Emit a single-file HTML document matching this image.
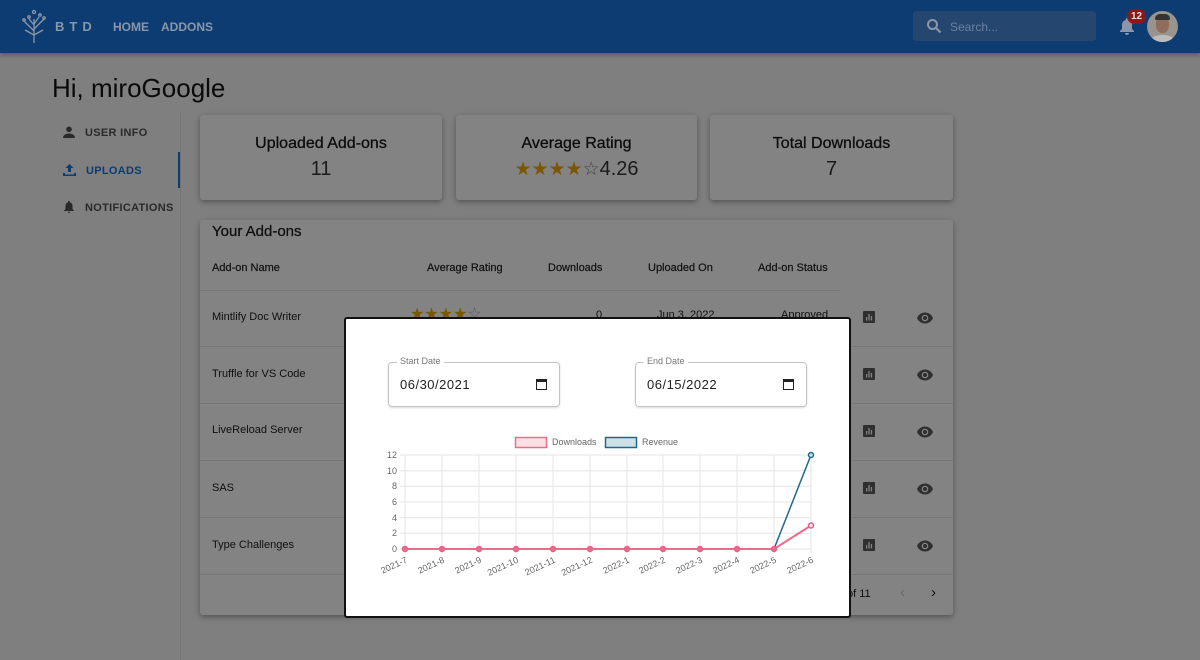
<!DOCTYPE html>
<html><head><meta charset="utf-8"><style>
*{box-sizing:border-box;margin:0;padding:0}
body{width:1200px;height:660px;overflow:hidden;background:#7f7f7f;font-family:"Liberation Sans",sans-serif;position:relative;color:#0f0f0f}
.nav{position:absolute;left:0;top:0;width:1200px;height:53px;background:#0c3c72;box-shadow:0 2px 4px rgba(0,0,0,.3)}
.nav .t{position:absolute;color:#8a97a8;font-weight:bold;font-size:12px}
.card{position:absolute;background:#838383;border-radius:3px;box-shadow:0 2px 6px rgba(0,0,0,.35)}
.stat{text-align:center}
.stat .h{font-size:16px;margin-top:20px;color:#0d0d0d;-webkit-text-stroke:.3px #0d0d0d}
.stat .v{font-size:20px;margin-top:5px;color:#1a1a1a}
.side{position:absolute;font-size:11px;font-weight:bold;color:#2a2a2a;letter-spacing:.3px}
.row{position:absolute;left:0;width:753px;border-top:1px solid #777;font-size:11px}
.th{position:absolute;top:262px;font-size:11px;color:#111;-webkit-text-stroke:.2px #111}
.modal{position:absolute;left:344px;top:317px;width:507px;height:301px;background:#fff;border:2px solid #111;border-radius:3px}
.inp{position:absolute;width:172px;height:45px;border:1px solid #c4c4c4;border-radius:4px;font-size:13px;color:#222;box-shadow:0 1px 2px rgba(0,0,0,.15)}
.inp .lab{position:absolute;top:-7px;left:8px;background:#fff;padding:0 3px;font-size:9px;color:#777}
.inp .val{position:absolute;left:11px;top:14px;letter-spacing:.5px}
.inp .cal{position:absolute;right:12px;top:16px;width:11px;height:11px;border:1.5px solid #222;border-top-width:3px}
</style></head><body>
<div class="nav">
<svg style="position:absolute;left:21px;top:9px" width="26" height="34" viewBox="0 0 26 34" fill="none" stroke="#8a97a8" stroke-width="1.3"><path d="M13 34V10M13 22L6 15M13 20L20 13M13 26L4 21M13 26L22 21M13 16L8 10M13 15L18 8M6 15L3 12M20 13L23 10"/><circle cx="13" cy="3" r="1.5"/><circle cx="8" cy="8" r="1.2"/><circle cx="19" cy="6" r="1.2"/><circle cx="3" cy="11" r="1.2"/><circle cx="23" cy="9" r="1.2"/></svg>
<div class="t" style="left:55px;top:19px;font-size:13px;letter-spacing:5px">BTD</div>
<div class="t" style="left:113px;top:20px">HOME</div>
<div class="t" style="left:161px;top:20px">ADDONS</div>
<div style="position:absolute;left:913px;top:11px;width:183px;height:30px;background:#24466f;border-radius:3px"></div>
<svg style="position:absolute;left:926px;top:18px" width="16" height="16" viewBox="0 0 16 16" fill="none" stroke="#8a97a8" stroke-width="2"><circle cx="6.5" cy="6.5" r="4.5"/><path d="M10 10l4.5 4.5"/></svg>
<div style="position:absolute;left:950px;top:20px;font-size:12px;color:#6a80a0">Search...</div>
<svg style="position:absolute;left:1119px;top:17px" width="16" height="18" viewBox="0 0 16 18" fill="#8a97a8"><path d="M8 1a1.3 1.3 0 0 0-1.3 1.3v.6A5 5 0 0 0 3 8v4l-2 2v1h14v-1l-2-2V8a5 5 0 0 0-3.7-5.1v-.6A1.3 1.3 0 0 0 8 1zM6 16a2 2 0 0 0 4 0z"/></svg>
<div style="position:absolute;left:1127px;top:9px;width:19px;height:15px;border-radius:8px;background:#8a1a1a;color:#ddd;font-size:10px;font-weight:bold;text-align:center;line-height:15px">12</div>
<div style="position:absolute;left:1147px;top:11px;width:31px;height:31px;border-radius:50%;background:#9a948e;overflow:hidden"><div style="position:absolute;left:9px;top:5px;width:13px;height:17px;border-radius:45%;background:#8e6d5c"></div><div style="position:absolute;left:8px;top:3px;width:15px;height:6px;border-radius:7px 7px 2px 2px;background:#333"></div><div style="position:absolute;left:4px;top:24px;width:23px;height:10px;border-radius:50%;background:#bcbcbc"></div></div>
</div>
<div style="position:absolute;left:52px;top:73px;font-size:26px;color:#0a0a0a">Hi, miroGoogle</div>
<div style="position:absolute;left:180px;top:113px;width:1px;height:547px;background:#757575"></div>
<div style="position:absolute;left:178px;top:152px;width:2px;height:36px;background:#0c3c72"></div>
<svg style="position:absolute;left:63px;top:126px" width="12" height="12" viewBox="0 0 12 12" fill="#2a2a2a"><circle cx="6" cy="3.3" r="2.8"/><path d="M0 12c0-3 3-4.5 6-4.5s6 1.5 6 4.5z"/></svg>
<div class="side" style="left:85px;top:127px">USER INFO</div>
<svg style="position:absolute;left:63px;top:164px" width="13" height="12" viewBox="0 0 13 12" fill="#0c3c72"><path d="M6.5 0L2.5 4h2.5v4h3V4h2.5zM0 9h2v1.5h9V9h2v3H0z"/></svg>
<div class="side" style="left:86px;top:165px;color:#0c3c72">UPLOADS</div>
<svg style="position:absolute;left:64px;top:201px" width="10" height="12" viewBox="0 0 10 12" fill="#2a2a2a"><path d="M5 0a1 1 0 0 0-1 1v.4A3.5 3.5 0 0 0 1.5 5v3L0 9.5v.5h10v-.5L8.5 8V5A3.5 3.5 0 0 0 6 1.4V1a1 1 0 0 0-1-1zM3.8 10.8a1.2 1.2 0 0 0 2.4 0z"/></svg>
<div class="side" style="left:85px;top:202px">NOTIFICATIONS</div>

<div class="card stat" style="left:200px;top:115px;width:242px;height:85px"><div class="h">Uploaded Add-ons</div><div class="v">11</div></div>
<div class="card stat" style="left:456px;top:115px;width:241px;height:85px"><div class="h">Average Rating</div><div class="v"><span style="color:#7a5700;font-size:19px">★★★★</span><span style="color:#444;font-size:19px">☆</span>4.26</div></div>
<div class="card stat" style="left:710px;top:115px;width:243px;height:85px"><div class="h">Total Downloads</div><div class="v">7</div></div>

<div class="card" style="left:200px;top:220px;width:753px;height:395px">
<div style="position:absolute;left:12px;top:3px;font-size:15px;color:#111;-webkit-text-stroke:.3px #111">Your Add-ons</div>
<div style="position:absolute;left:0;top:70px;width:640px;height:1px;background:#777"></div>
<div style="position:absolute;left:12px;top:91px;font-size:11px">Mintlify Doc Writer</div>
<div style="position:absolute;left:210px;top:84px;font-size:16px;color:#7a5700">★★★★<span style="color:#555">☆</span></div>
<div style="position:absolute;left:396px;top:89px;font-size:11px">0</div>
<div style="position:absolute;left:457px;top:89px;font-size:11px">Jun 3, 2022</div>
<div style="position:absolute;left:581px;top:89px;font-size:11px">Approved</div>
<div class="row" style="top:126px"></div><div style="position:absolute;left:12px;top:148px;font-size:11px">Truffle for VS Code</div>
<div class="row" style="top:183px"></div><div style="position:absolute;left:12px;top:204px;font-size:11px">LiveReload Server</div>
<div class="row" style="top:240px"></div><div style="position:absolute;left:12px;top:262px;font-size:11px">SAS</div>
<div class="row" style="top:297px"></div><div style="position:absolute;left:12px;top:319px;font-size:11px">Type Challenges</div>
<div class="row" style="top:354px"></div>
<div style="position:absolute;left:647px;top:368px;font-size:11px">of 11</div>
<div style="position:absolute;left:700px;top:364px;font-size:15px;color:#666">‹</div>
<div style="position:absolute;left:731px;top:364px;font-size:15px;color:#111">›</div>
</div>
<div class="th" style="left:212px">Add-on Name</div>
<div class="th" style="left:427px">Average Rating</div>
<div class="th" style="left:548px">Downloads</div>
<div class="th" style="left:648px">Uploaded On</div>
<div class="th" style="left:758px">Add-on Status</div>
<svg width="0" height="0" style="position:absolute"><defs>
<g id="bar"><rect x="0" y="0" width="12" height="12" rx="1" fill="#2f2f2f"/><rect x="3" y="6" width="1.3" height="3.5" fill="#838383"/><rect x="5.4" y="3" width="1.3" height="6.5" fill="#838383"/><rect x="7.8" y="5" width="1.3" height="4.5" fill="#838383"/></g>
<g id="eye"><path d="M0 6C1.5 2.5 4.5 0.5 8 0.5S14.5 2.5 16 6C14.5 9.5 11.5 11.5 8 11.5S1.5 9.5 0 6z" fill="#2f2f2f"/><circle cx="8" cy="6" r="3.3" fill="#838383"/><circle cx="8" cy="6" r="2" fill="#2f2f2f"/></g>
</defs></svg>
<svg style="position:absolute;left:863px;top:311px" width="12" height="12"><use href="#bar"/></svg>
<svg style="position:absolute;left:917px;top:312px" width="16" height="12"><use href="#eye"/></svg>
<svg style="position:absolute;left:863px;top:368px" width="12" height="12"><use href="#bar"/></svg>
<svg style="position:absolute;left:917px;top:369px" width="16" height="12"><use href="#eye"/></svg>
<svg style="position:absolute;left:863px;top:425px" width="12" height="12"><use href="#bar"/></svg>
<svg style="position:absolute;left:917px;top:426px" width="16" height="12"><use href="#eye"/></svg>
<svg style="position:absolute;left:863px;top:482px" width="12" height="12"><use href="#bar"/></svg>
<svg style="position:absolute;left:917px;top:483px" width="16" height="12"><use href="#eye"/></svg>
<svg style="position:absolute;left:863px;top:539px" width="12" height="12"><use href="#bar"/></svg>
<svg style="position:absolute;left:917px;top:540px" width="16" height="12"><use href="#eye"/></svg>

<div class="modal">
<div class="inp" style="left:42px;top:43px"><span class="lab">Start Date</span><span class="val">06/30/2021</span><span class="cal"></span></div>
<div class="inp" style="left:289px;top:43px"><span class="lab">End Date</span><span class="val">06/15/2022</span><span class="cal"></span></div>
</div>
<svg style="position:absolute;left:346px;top:319px" width="503" height="297" viewBox="346 319 503 297" font-family="Liberation Sans, sans-serif" font-size="9" fill="#666">
<rect x="515.5" y="437.5" width="31" height="10" fill="#fde0e6" stroke="#f06a8a" stroke-width="1.5"/>
<text x="552" y="445" font-size="9">Downloads</text>
<rect x="605.5" y="437.5" width="31" height="10" fill="#cfe0e8" stroke="#1e6a8a" stroke-width="1.5"/>
<text x="642" y="445">Revenue</text>
<g stroke="#e6e6e6" stroke-width="1">
<line x1="400" y1="455" x2="811" y2="455"/><line x1="400" y1="470.7" x2="811" y2="470.7"/><line x1="400" y1="486.3" x2="811" y2="486.3"/><line x1="400" y1="502" x2="811" y2="502"/><line x1="400" y1="517.7" x2="811" y2="517.7"/><line x1="400" y1="533.3" x2="811" y2="533.3"/><line x1="400" y1="549" x2="811" y2="549"/>
<line x1="405" y1="455" x2="405" y2="553"/><line x1="442" y1="455" x2="442" y2="553"/><line x1="479" y1="455" x2="479" y2="553"/><line x1="516" y1="455" x2="516" y2="553"/><line x1="553" y1="455" x2="553" y2="553"/><line x1="590" y1="455" x2="590" y2="553"/><line x1="627" y1="455" x2="627" y2="553"/><line x1="663" y1="455" x2="663" y2="553"/><line x1="700" y1="455" x2="700" y2="553"/><line x1="737" y1="455" x2="737" y2="553"/><line x1="774" y1="455" x2="774" y2="553"/><line x1="811" y1="455" x2="811" y2="553"/>
</g>
<g text-anchor="end"><text x="397" y="458">12</text><text x="397" y="474">10</text><text x="397" y="489">8</text><text x="397" y="505">6</text><text x="397" y="521">4</text><text x="397" y="536">2</text><text x="397" y="552">0</text></g>
<g text-anchor="end">
<text transform="translate(408,562) rotate(-25)">2021-7</text><text transform="translate(445,562) rotate(-25)">2021-8</text><text transform="translate(482,562) rotate(-25)">2021-9</text><text transform="translate(519,562) rotate(-25)">2021-10</text><text transform="translate(556,562) rotate(-25)">2021-11</text><text transform="translate(593,562) rotate(-25)">2021-12</text><text transform="translate(630,562) rotate(-25)">2022-1</text><text transform="translate(666,562) rotate(-25)">2022-2</text><text transform="translate(703,562) rotate(-25)">2022-3</text><text transform="translate(740,562) rotate(-25)">2022-4</text><text transform="translate(777,562) rotate(-25)">2022-5</text><text transform="translate(814,562) rotate(-25)">2022-6</text>
</g>
<polyline points="774,549 811,455" fill="none" stroke="#1e6a8a" stroke-width="1.5"/>
<circle cx="811" cy="455" r="2.5" fill="#cfe0e8" stroke="#1e6a8a" stroke-width="1.5"/>
<polyline points="405,549 774,549 811,525.5" fill="none" stroke="#f06a8a" stroke-width="2"/>
<g fill="#f06a8a" stroke="#e8608a" stroke-width="1.5"><circle cx="405" cy="549" r="2.5"/><circle cx="442" cy="549" r="2.5"/><circle cx="479" cy="549" r="2.5"/><circle cx="516" cy="549" r="2.5"/><circle cx="553" cy="549" r="2.5"/><circle cx="590" cy="549" r="2.5"/><circle cx="627" cy="549" r="2.5"/><circle cx="663" cy="549" r="2.5"/><circle cx="700" cy="549" r="2.5"/><circle cx="737" cy="549" r="2.5"/><circle cx="774" cy="549" r="2.5"/><circle cx="811" cy="525.5" r="2.5" fill="#fde0e6"/></g>
</svg>
</body></html>
